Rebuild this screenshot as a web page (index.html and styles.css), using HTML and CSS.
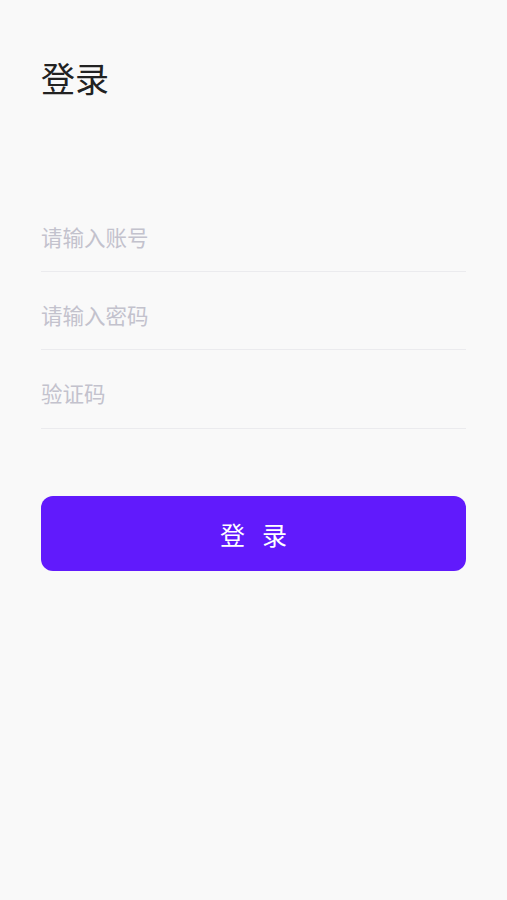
FILE: index.html
```html
<!DOCTYPE html>
<html lang="zh-CN">
<head>
<meta charset="utf-8">
<title>登录</title>
<link rel="stylesheet" href="styles.css">
</head>
<body>
<main class="page">
  <h1 class="title">登录</h1>
  <form class="form">
    <div class="field"><input class="input" type="text" placeholder="请输入账号"></div>
    <div class="field"><input class="input" type="password" placeholder="请输入密码"></div>
    <div class="field"><input class="input" type="text" placeholder="验证码"></div>
    <button class="submit" type="button">登录</button>
  </form>
</main>
</body>
</html>
```

FILE: styles.css
```css
html, body {
  margin: 0;
  padding: 0;
  background: #f9f9f9;
}
body {
  font-family: "Noto Sans CJK SC", "Noto Sans", sans-serif;
}
.page {
  padding: 55px 41px 0 41px;
}
.title {
  margin: 0;
  font-size: 34px;
  line-height: 45px;
  font-weight: 400;
  color: #222;
}
.form {
  display: flex;
  flex-direction: column;
  margin-top: 94px;
}
.field {
  padding: 28px 0 19px 0;
  border-bottom: 1px solid #ebebee;
}
.field:last-of-type {
  padding-bottom: 20px;
}
.input {
  display: block;
  width: 100%;
  border: 0;
  outline: none;
  background: transparent;
  padding: 0;
  margin: 0;
  font-family: inherit;
  font-size: 21.5px;
  line-height: 30px;
  height: 30px;
  color: #333;
}
.input::placeholder {
  color: #c3c2cd;
}
.submit {
  margin-top: 67px;
  height: 75px;
  border: 0;
  border-radius: 12px;
  background: #611afc;
  color: #fff;
  font-family: inherit;
  font-size: 25px;
  letter-spacing: 17px;
  text-indent: 17px;
  padding: 0;
}
```
